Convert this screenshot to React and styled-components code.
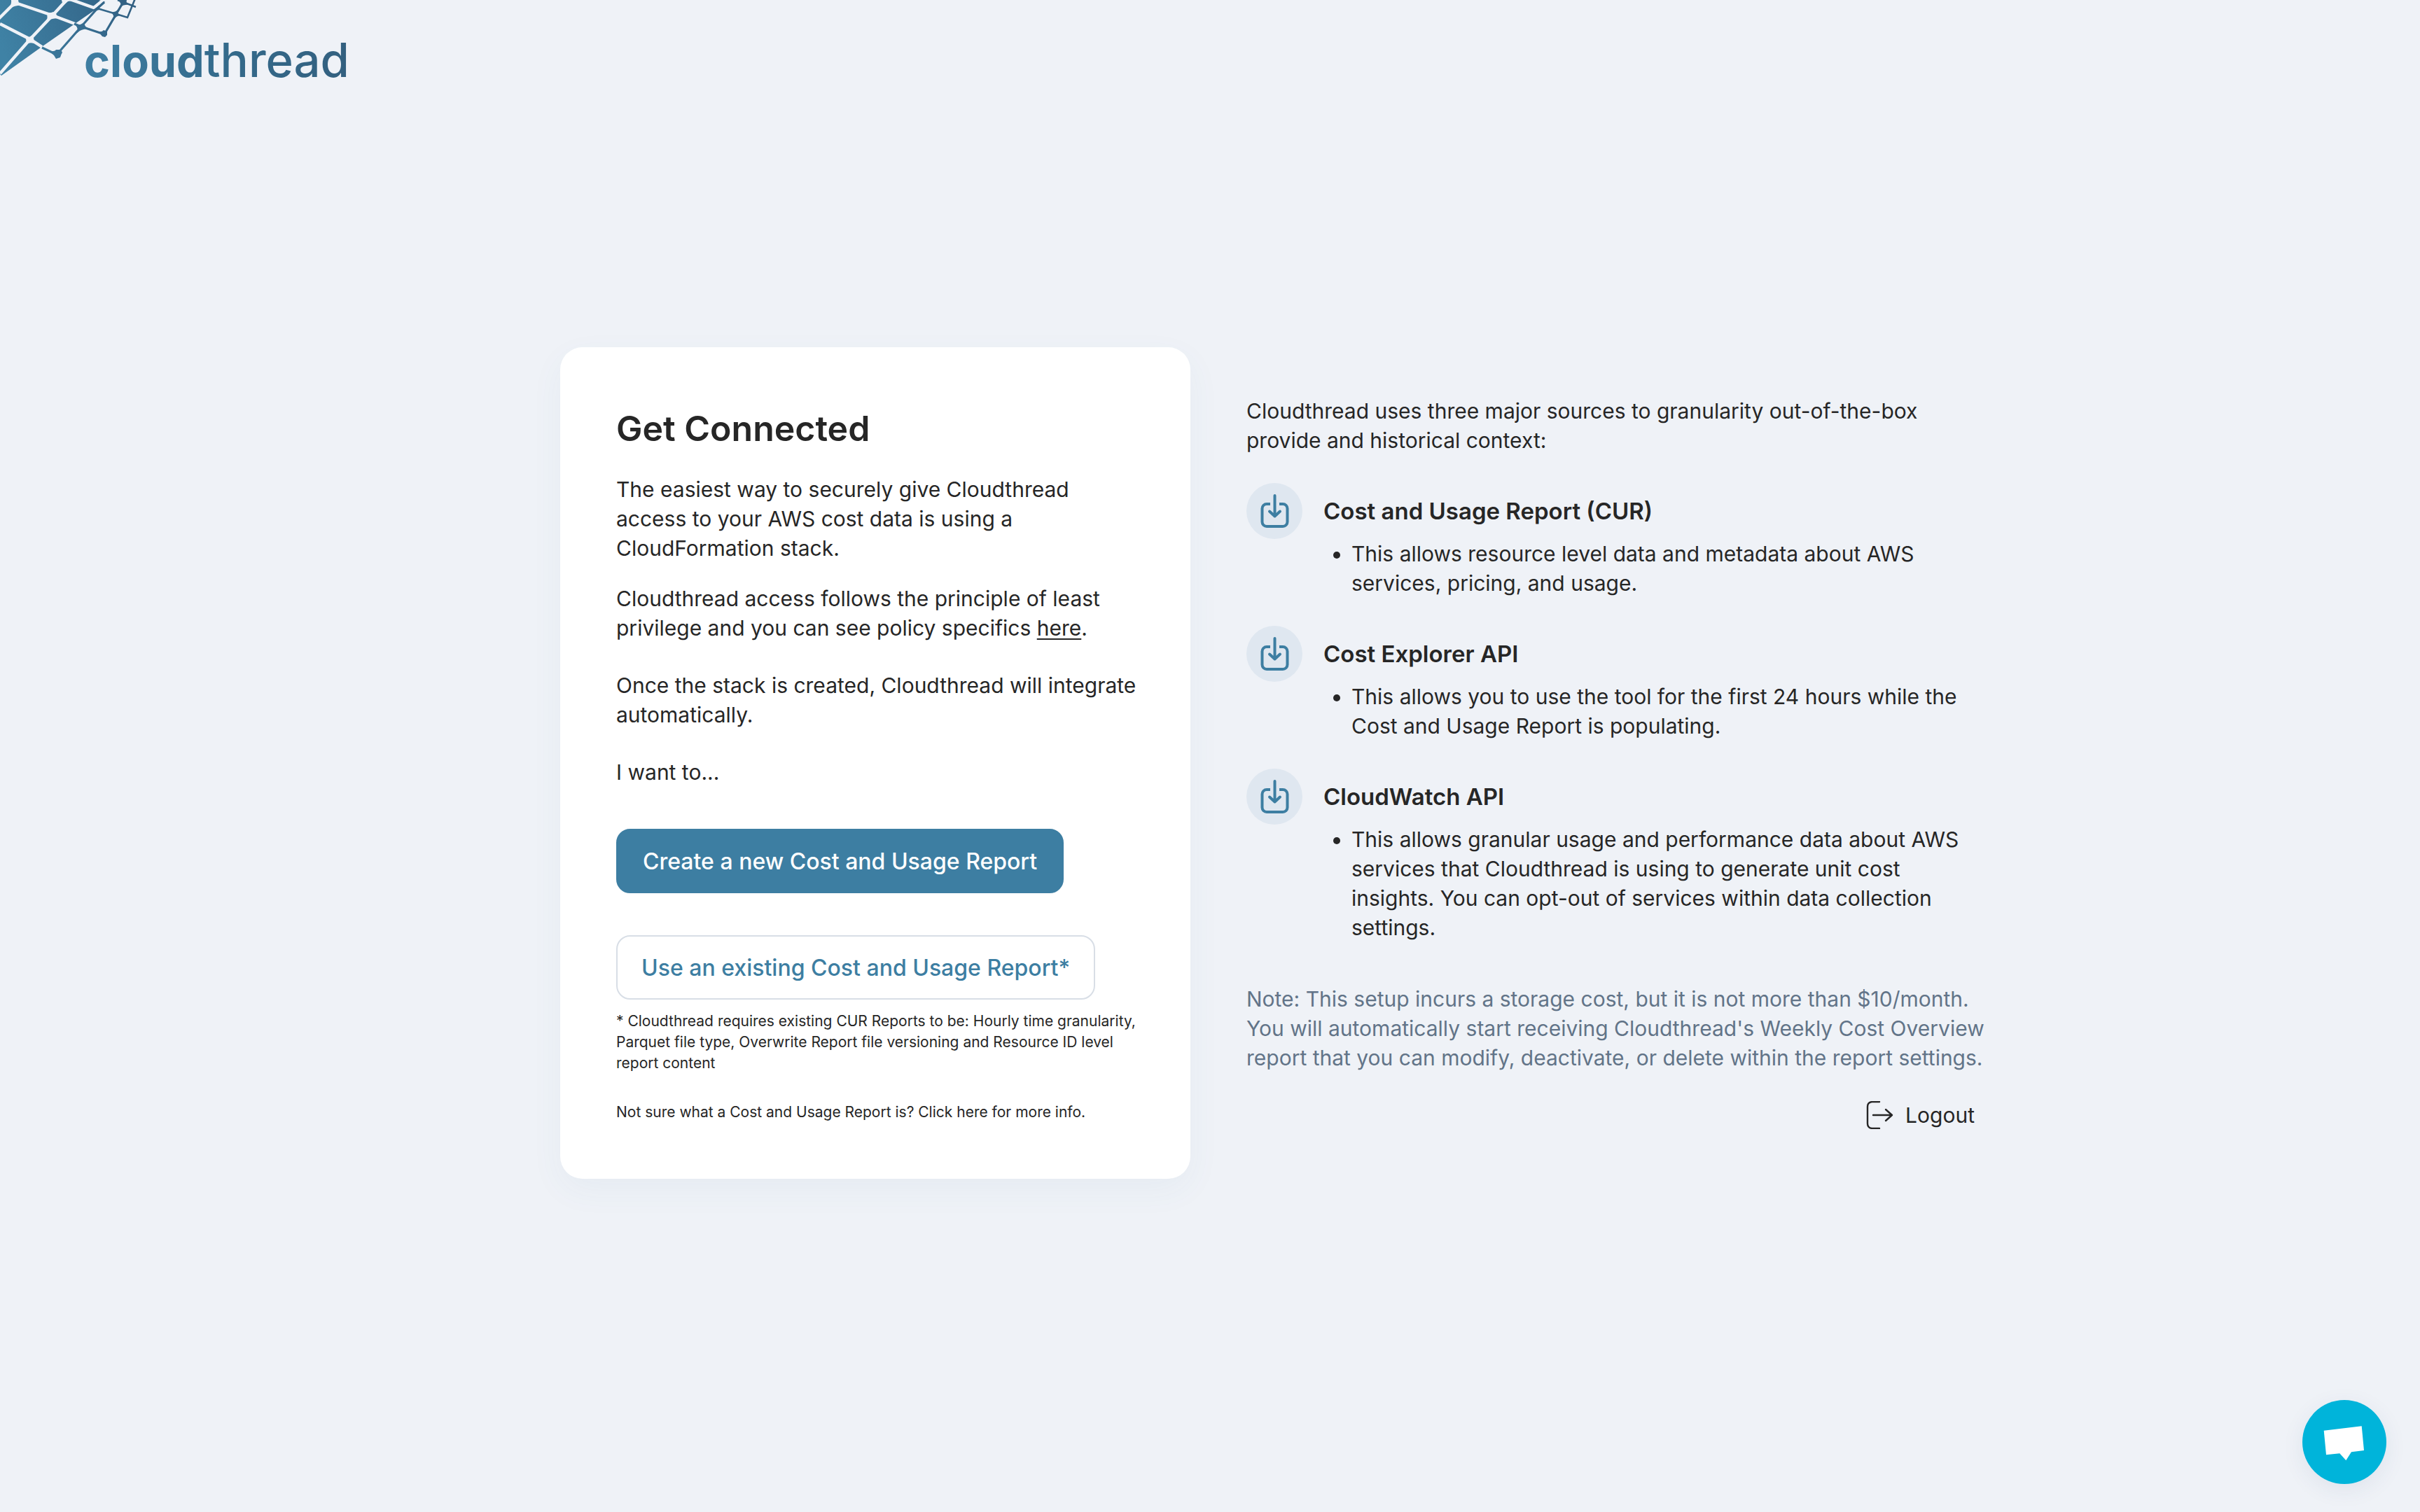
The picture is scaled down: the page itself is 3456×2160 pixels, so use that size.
import React from "react";
import styled, { createGlobalStyle } from "styled-components";

const color = {
  page: "#eff2f7",
  ink: "#262626",
  brand: "#3d7ea2",
  muted: "#627488",
  border: "#d8dee6",
  tint: "#dfe7f0",
  chat: "#00b4da",
};

const GlobalStyle = createGlobalStyle`
  *, *::before, *::after { box-sizing: border-box; }
  body {
    margin: 0;
    background: ${color.page};
    color: ${color.ink};
    font-family: Inter, "Open Sans", sans-serif;
    font-size: 30px;
    line-height: 42px;
  }
  h1, h2, p, ul { margin: 0; }
  button { font-family: inherit; cursor: pointer; }
`;

const Page = styled.div`
  min-height: 100vh;
  display: grid;
  grid-template-rows: 180px 1fr 160px;
`;

const Header = styled.header`
  display: flex;
  align-items: flex-start;
`;

const HomeLink = styled.a`
  display: grid;
  grid-template-columns: 120px auto;
  text-decoration: none;
`;

const Mesh = styled.svg`
  display: block;
  width: 200px;
  height: 110px;
`;

const Wordmark = styled.span`
  padding-top: 48px;
  font-size: 63px;
  line-height: 76px;
  font-weight: 700;
  color: transparent;
  background: linear-gradient(90deg, #3e7ea2, #346b8c 50%, #33607f);
  background-clip: text;
  -webkit-background-clip: text;
`;

const WordmarkLight = styled.span`
  font-size: 67px;
  font-weight: 500;
`;

const Main = styled.main`
  display: flex;
  justify-content: center;
  align-items: center;
  gap: 80px;
  padding-left: 180px;
`;

const Card = styled.section`
  flex: 0 1 900px;
  padding: 80px 72px 80px 80px;
  border-radius: 32px;
  background: #fff;
  box-shadow: 0 16px 48px rgba(62, 126, 162, 0.05);
`;

const Title = styled.h1`
  font-size: 50px;
  line-height: 72px;
  font-weight: 600;
`;

const Text = styled.p`
  margin-top: ${(p) => p.$gap}px;
`;

const InkLink = styled.a`
  color: inherit;
  text-decoration: ${(p) => (p.$underlined ? "underline" : "none")};
  text-decoration-thickness: 2px;
  text-underline-offset: 4px;
`;

const Actions = styled.div`
  display: flex;
  flex-direction: column;
  align-items: flex-start;
  gap: 60px;
  margin-top: 60px;
`;

const Button = styled.button`
  height: 92px;
  padding: 0 ${(p) => (p.$primary ? 36 : 34)}px;
  border-radius: 20px;
  border: 2px solid ${(p) => (p.$primary ? color.brand : color.border)};
  background: ${(p) => (p.$primary ? color.brand : "#fff")};
  color: ${(p) => (p.$primary ? "#fff" : color.brand)};
  font-size: 32px;
  font-weight: 500;
`;

const Small = styled.p`
  margin-top: ${(p) => p.$gap}px;
  font-size: 21px;
  line-height: 30px;
`;

const Info = styled.section`
  flex: 0 1 1056px;
  display: flex;
  flex-direction: column;
`;

const Source = styled.article`
  display: grid;
  grid-template-columns: 80px 1fr;
  column-gap: 30px;
  align-items: center;
  margin-top: 40px;
`;

const IconDisc = styled.svg`
  display: block;
  width: 80px;
  height: 80px;
  border-radius: 50%;
  background: ${color.tint};
  fill: none;
  stroke: ${color.brand};
  stroke-width: 4;
`;

const SourceTitle = styled.h2`
  font-size: 33px;
  line-height: 48px;
  font-weight: 600;
`;

const Points = styled.ul`
  grid-column: 2;
  padding-left: 40px;
  margin-bottom: ${(p) => (p.$last ? 20 : 0)}px;
`;

const Note = styled.p`
  margin-top: 40px;
  color: ${color.muted};
`;

const Logout = styled.button`
  align-self: flex-end;
  display: flex;
  align-items: center;
  gap: 16px;
  margin-top: 40px;
  padding: 0 16px 0 0;
  border: 0;
  background: none;
  color: ${color.ink};
  font-size: 30px;
  line-height: 42px;
`;

const LogoutIcon = styled.svg`
  width: 40px;
  height: 40px;
  fill: none;
  stroke: currentColor;
  stroke-width: 2.4;
  stroke-linecap: round;
  stroke-linejoin: round;
`;

const Footer = styled.footer`
  display: flex;
  justify-content: flex-end;
  padding: 0 48px 40px;
`;

const ChatButton = styled.button`
  width: 120px;
  height: 120px;
  padding: 0;
  border: 0;
  border-radius: 50%;
  background: ${color.chat};
  box-shadow: 0 8px 32px rgba(40, 60, 120, 0.08);
`;

const ChatIcon = styled.svg`
  display: block;
  width: 120px;
  height: 120px;
  fill: #fff;
`;

function MeshLogo() {
  return (
    <Mesh viewBox="0 0 200 110" aria-hidden="true">
      <defs>
        <linearGradient id="mesh" gradientUnits="userSpaceOnUse" x1="0" y1="60" x2="190" y2="0">
          <stop offset="0" stopColor="#3f82a5" />
          <stop offset="1" stopColor="#315f82" />
        </linearGradient>
      </defs>
      <path fill="url(#mesh)" d="M0 0H141L150 2Q143 9 133 16L104 36L58 68L2 108L0 106Z" />
      <g stroke={color.page} fill="none" strokeWidth="4.4">
        <path d="M0 34L43 56L60 67" />
        <path d="M-2 27L22 3L16 -6" />
        <path d="M22 4L75 22L107 34" />
        <path d="M0 105L43 56L75 22L97 -2" />
        <path d="M97 -2L134 11L150 -2" />
      </g>
      <g fill={color.page}>
        <path d="M16 0H26L27 5L33 8Q22 7 15 12L12 12Q17 7 16 0Z" />
        <path d="M66 18Q72 19 76 17L80 19Q80 23 88 27Q76 25 70 29L64 32Q70 26 66 18Z" />
        <path d="M36 53Q41 54 45 51L48 54Q48 60 55 64Q46 60 40 62L34 66Q40 60 36 53Z" />
        <path d="M88 0H112Q102 1 97 2L90 8Z" />
      </g>
      <g stroke="url(#mesh)" fill="none" strokeWidth="3.2" strokeLinejoin="round">
        <path d="M60 68L81 78L116 38L139 12L149 3" />
        <path d="M106 34L116 38L149 49L166 20L176 3L178 -2" />
        <path d="M139 12L166 20L182 25L193 -2" strokeWidth="2.6" strokeLinejoin="miter" />
        <path d="M168 0L176 3L194 10" strokeWidth="2.6" />
      </g>
      <g fill="url(#mesh)">
        <path d="M70 73Q78 74 80 71L87 71L89 75Q87 78 86 82L80 84L77 79Z" />
        <path d="M108 36Q116 36 121 31Q119 39 129 41Q119 41 114 44L109 48Q113 42 108 36Z" />
        <path d="M140 45Q146 46 148 43L153 45L153 50L150 53L146 52Z" />
        <path d="M158 17Q164 18 168 14Q166 20 174 22Q168 22 165 25L162 29Q164 22 158 17Z" />
        <path d="M168 0H181Q179 5 185 7Q177 6 172 10Q174 4 168 0Z" />
        <path d="M133 14Q139 10 150 2Q143 9 141 11L147 14Q140 13 134 18Z" />
      </g>
    </Mesh>
  );
}

function DownloadIcon() {
  return (
    <IconDisc viewBox="0 0 80 80" aria-hidden="true">
      <path d="M34 30H29A6.5 6.5 0 0 0 22.500 36.500V55.500A6.500 6.500 0 0 0 29 62H52A6.500 6.500 0 0 0 58.500 55.500V36.500A6.500 6.500 0 0 0 52 30H47" />
      <path d="M40.500 18V47M33 40.500L40.500 47.500L48 40.500" strokeLinecap="round" strokeLinejoin="round" />
    </IconDisc>
  );
}

const sources = [
  {
    title: "Cost and Usage Report (CUR)",
    lines: ["This allows resource level data and metadata about AWS", "services, pricing, and usage."],
  },
  {
    title: "Cost Explorer API",
    lines: ["This allows you to use the tool for the first 24 hours while the", "Cost and Usage Report is populating."],
  },
  {
    title: "CloudWatch API",
    lines: [
      "This allows granular usage and performance data about AWS",
      "services that Cloudthread is using to generate unit cost",
      "insights. You can opt-out of services within data collection",
      "settings.",
    ],
  },
];

function Lines({ of }) {
  return of.map((line, i) => (
    <React.Fragment key={line}>
      {i > 0 && <br />}
      {line}
    </React.Fragment>
  ));
}

export default function App() {
  return (
    <Page>
      <GlobalStyle />
      <Header>
        <HomeLink href="#">
          <MeshLogo />
          <Wordmark>
            cloud<WordmarkLight>thread</WordmarkLight>
          </Wordmark>
        </HomeLink>
      </Header>

      <Main>
        <Card>
          <Title>Get Connected</Title>
          <Text $gap={30}>
            <Lines
              of={[
                "The easiest way to securely give Cloudthread",
                "access to your AWS cost data is using a",
                "CloudFormation stack.",
              ]}
            />
          </Text>
          <Text $gap={30}>
            Cloudthread access follows the principle of least
            <br />
            privilege and you can see policy specifics{" "}
            <InkLink href="#" $underlined>here</InkLink>.
          </Text>
          <Text $gap={40}>
            <Lines of={["Once the stack is created, Cloudthread will integrate", "automatically."]} />
          </Text>
          <Text $gap={40}>I want to...</Text>
          <Actions>
            <Button type="button" $primary>Create a new Cost and Usage Report</Button>
            <Button type="button">Use an existing Cost and Usage Report*</Button>
          </Actions>
          <Small $gap={16}>
            <Lines
              of={[
                "* Cloudthread requires existing CUR Reports to be: Hourly time granularity,",
                "Parquet file type, Overwrite Report file versioning and Resource ID level",
                "report content",
              ]}
            />
          </Small>
          <Small $gap={40}>
            <InkLink href="#">Not sure what a Cost and Usage Report is? Click here for more info.</InkLink>
          </Small>
        </Card>

        <Info>
          <p>
            <Lines
              of={[
                "Cloudthread uses three major sources to granularity out-of-the-box",
                "provide and historical context:",
              ]}
            />
          </p>
          {sources.map((source, i) => (
            <Source key={source.title}>
              <DownloadIcon />
              <SourceTitle>{source.title}</SourceTitle>
              <Points $last={i === sources.length - 1}>
                <li>
                  <Lines of={source.lines} />
                </li>
              </Points>
            </Source>
          ))}
          <Note>
            <Lines
              of={[
                "Note: This setup incurs a storage cost, but it is not more than $10/month.",
                "You will automatically start receiving Cloudthread's Weekly Cost Overview",
                "report that you can modify, deactivate, or delete within the report settings.",
              ]}
            />
          </Note>
          <Logout type="button">
            <LogoutIcon viewBox="0 0 40 40" aria-hidden="true">
              <path d="M19 1H8Q2 2 2 8V32Q2 38 8 39H19" />
              <path d="M10 20H37M28 12L37 20L28 28" />
            </LogoutIcon>
            Logout
          </Logout>
        </Info>
      </Main>

      <Footer>
        <ChatButton type="button" aria-label="Open chat">
          <ChatIcon viewBox="0 0 120 120" aria-hidden="true">
            <path d="M30.700 43.700L84.700 37.300L88 72L70 74.300L62.300 86.300L53.300 76.300L34 78.300Z" />
          </ChatIcon>
        </ChatButton>
      </Footer>
    </Page>
  );
}
